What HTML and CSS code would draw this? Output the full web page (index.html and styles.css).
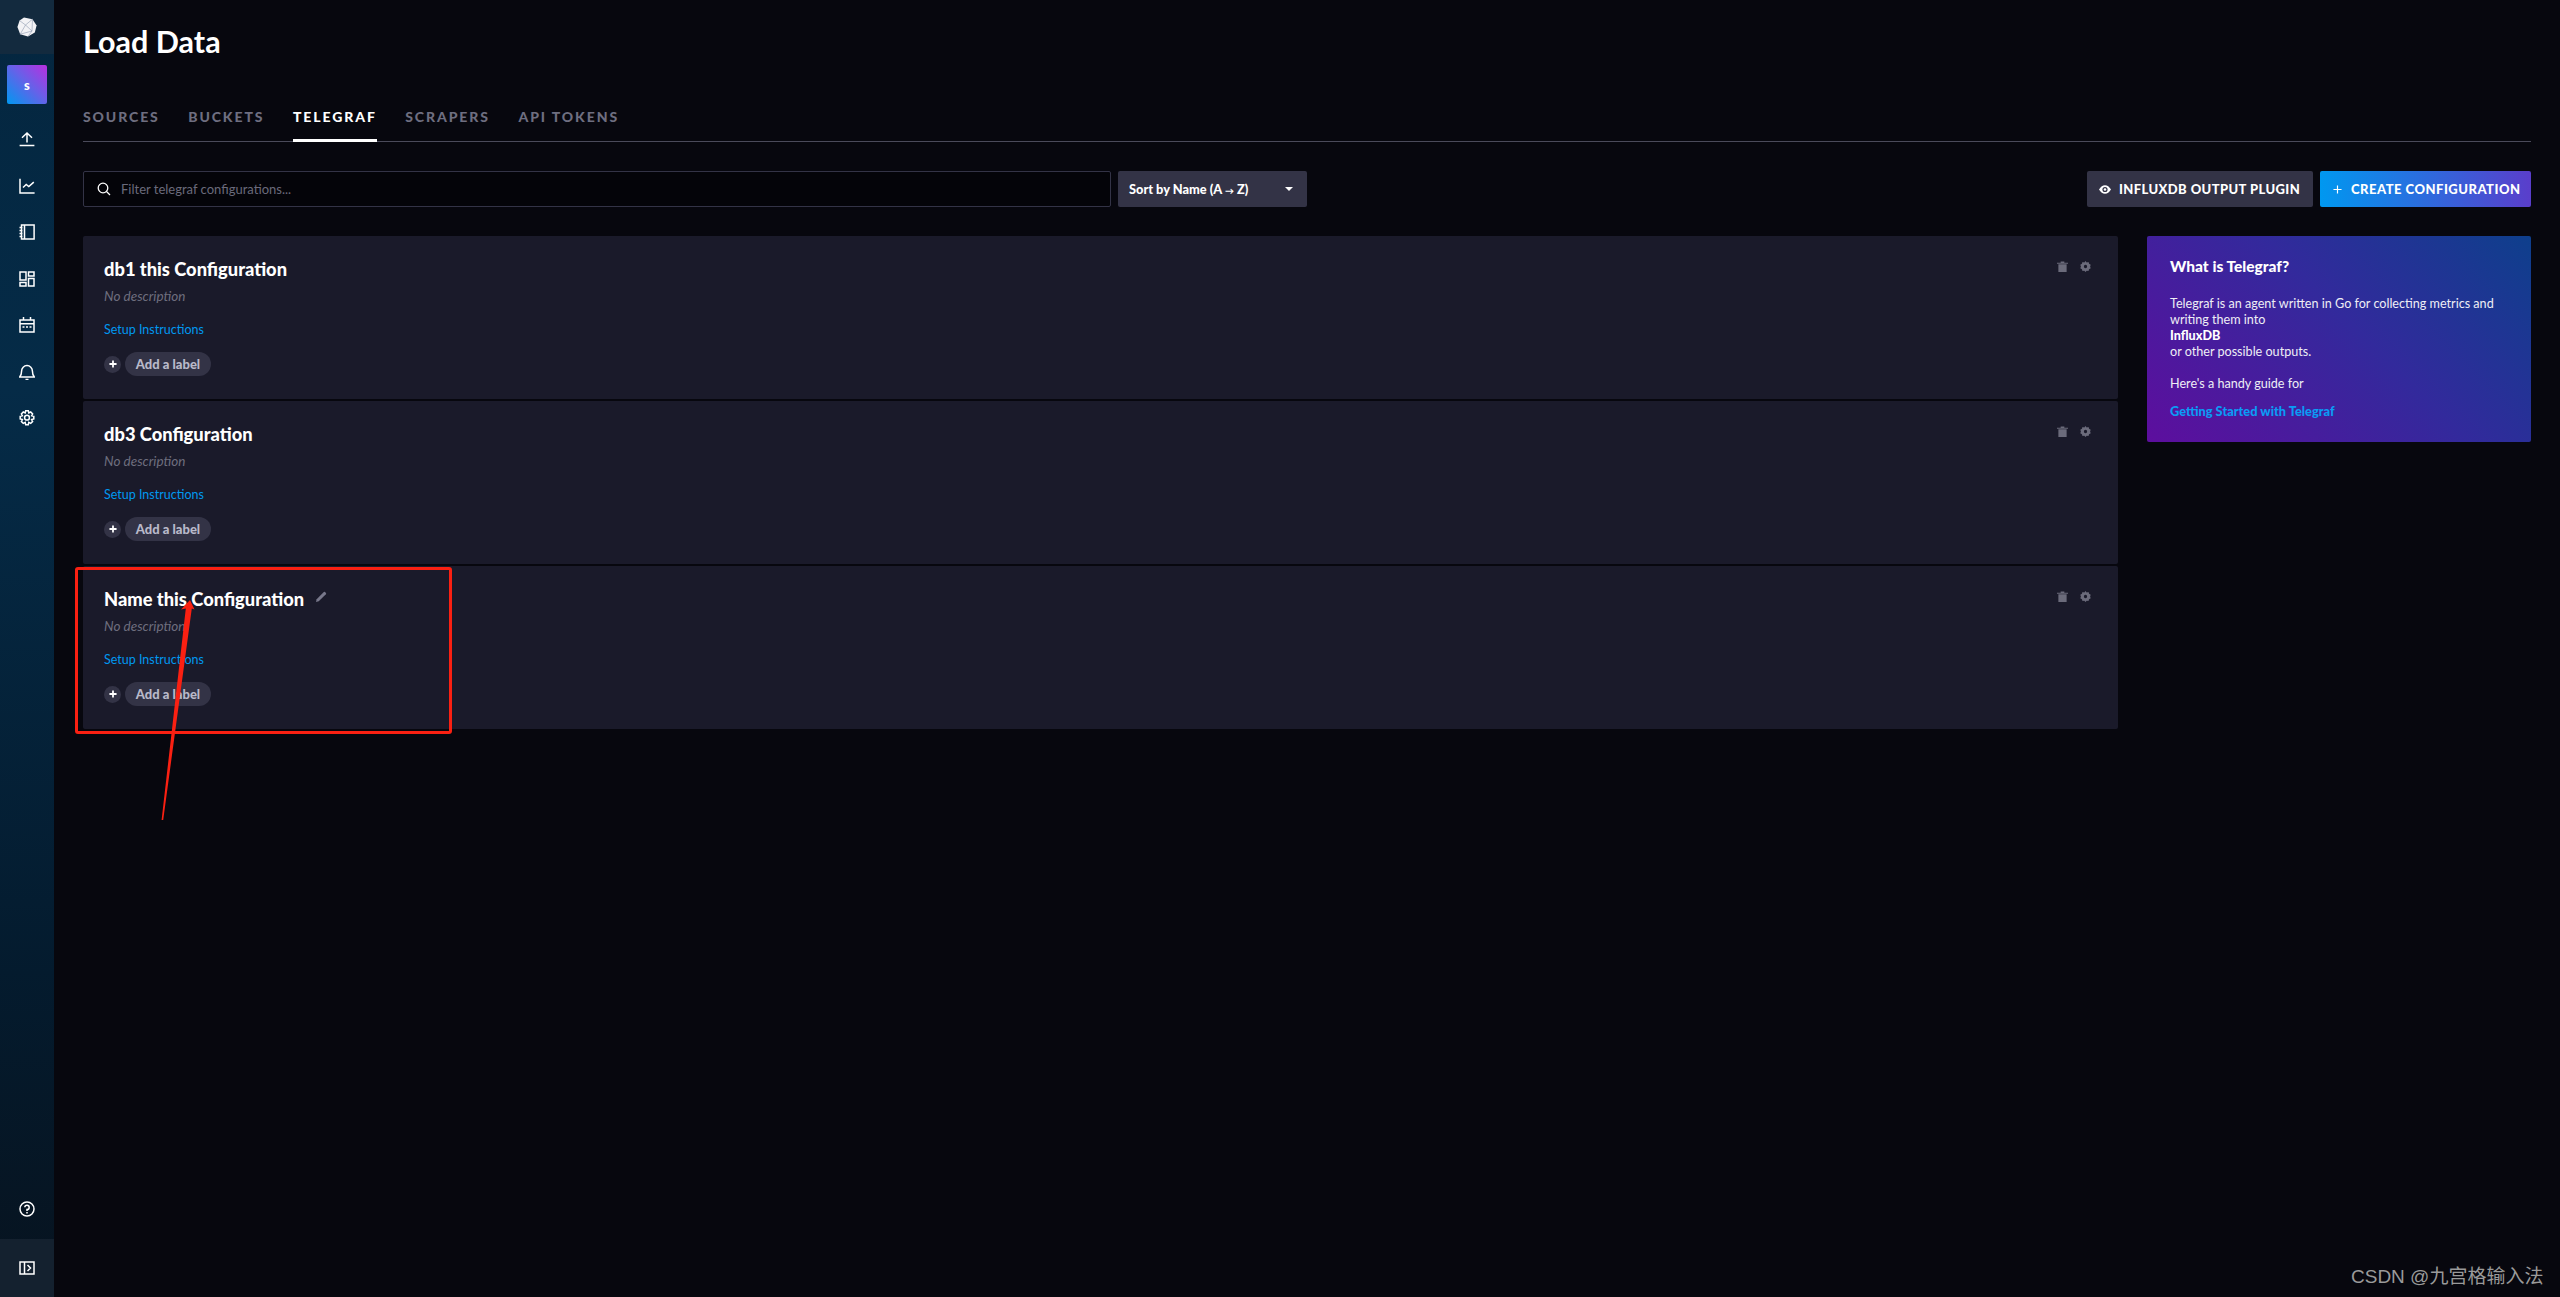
FILE: index.html
```html
<!DOCTYPE html>
<html lang="en">
<head>
<meta charset="utf-8">
<title>Load Data</title>
<link rel="stylesheet" href="styles.css">
</head>
<body>
<div class="app">
  <nav class="nav">
    <div class="nav-logo">
      <svg width="20" height="20" viewBox="0 0 20 20"><path d="M7 .6 15.500 2.200 19.600 8.400 17.800 15.600 11 19.400 3.200 17.200.4 10 2.600 3.600Z" fill="#f2f2f5"/><path d="M2.600 3.600 8.500 8 15.500 2.200M8.500 8 3.200 17.200M8.500 8 15 14 11 19.400M15 14 15.500 2.200M3.200 17.200 15 14" stroke="#8f9ab0" stroke-width=".6" fill="none"/></svg>
    </div>
    <div class="avatar">s</div>
    <div class="nav-items">
      <svg class="ico" viewBox="0 0 16 16"><path d="M8 11.500V2.200M3 6.800 8 2l5 4.800M.6 14.500h14.800"/></svg>
      <svg class="ico" viewBox="0 0 16 16"><path d="M1 .8V15h14.600M4 9.500l3.200-3 2.600 2 5-4.400"/></svg>
      <svg class="ico" viewBox="0 0 16 16"><path d="M2.500 1h12.600v14H2.500zM5.500 1v14M.5 3.500h3M.5 6.500h3M.5 9.500h3M.5 12.500h3"/></svg>
      <svg class="ico" viewBox="0 0 16 16"><path d="M1 1h6v8H1zM9.500 1H15v4H9.500zM9.500 7.500H15V15H9.500zM1 11.500h6V15H1z"/></svg>
      <svg class="ico" viewBox="0 0 16 16"><path d="M1 3h14v12H1zM1 6.800h14M4.500 0v3M11.500 0v3M3.500 10h2M7 10h2M10.500 10h2"/></svg>
      <svg class="ico" viewBox="0 0 16 16"><path d="M.6 13h14.800c-1.600-1.500-2-2.500-2-6A5.400 5.400 0 0 0 2.600 7c0 3.500-.4 4.500-2 6ZM6.500 15.400h3"/></svg>
      <svg class="ico" viewBox="0 0 16 16"><path d="M6.700.8h2.600l.5 2.100 1.900-.9 1.900 1.900-1 1.900 2.200.6v2.600l-2.200.6 1 1.900-1.900 1.900-1.900-1-.5 2.300H6.700l-.5-2.300-1.900 1-1.900-1.900 1-1.900-2.200-.6V6.400l2.200-.6-1-1.900L4.300 2l1.900.9Z"/><circle cx="8" cy="7.700" r="2.400"/></svg>
    </div>
    <div class="nav-help">
      <svg class="ico" viewBox="0 0 16 16"><circle cx="8" cy="8" r="7"/><path d="M5.800 6.200A2.200 2.200 0 1 1 8 8.600v1.300M8 11v1.500"/></svg>
    </div>
    <div class="nav-foot">
      <svg class="ico" viewBox="0 0 16 16"><path d="M1 2h14v12H1zM5.500 2v12M8.500 5l3 3-3 3"/></svg>
    </div>
  </nav>

  <main class="main">
    <h1 class="title">Load Data</h1>
    <div class="tabs">
      <a class="tab">Sources</a>
      <a class="tab">Buckets</a>
      <a class="tab tab-active">Telegraf</a>
      <a class="tab">Scrapers</a>
      <a class="tab">API Tokens</a>
    </div>

    <div class="toolbar">
      <div class="search">
        <svg class="search-ico" viewBox="0 0 14 14"><circle cx="6" cy="6" r="4.800"/><path d="m9.500 9.500 3.500 3.500"/></svg>
        <span>Filter telegraf configurations...</span>
      </div>
      <div class="sort">
        <span>Sort by Name (A <span class="arrow">→</span> Z)</span>
        <i class="caret"></i>
      </div>
      <div class="toolbar-right">
        <button class="btn btn-dark">
          <svg class="btn-ico" viewBox="0 0 14 10"><path d="M0 5c2-3.300 4.300-5 7-5s5 1.700 7 5c-2 3.300-4.300 5-7 5S2 8.300 0 5Z" fill="#fff"/><circle cx="7" cy="5" r="3" fill="#333346"/><circle cx="7" cy="5" r="1.500" fill="#fff"/></svg>
          Influxdb Output Plugin
        </button>
        <button class="btn btn-primary">
          <svg class="plus-ico" viewBox="0 0 10 10"><path d="M5 .5v9M.5 5h9" stroke="#fff" stroke-width="1.300"/></svg>
          Create Configuration
        </button>
      </div>
    </div>

    <div class="content">
      <div class="cards">
        <article class="card">
          <div class="card-head"><h2 class="card-title">db1 this Configuration</h2></div>
          <p class="card-desc">No description</p>
          <a class="card-link">Setup Instructions</a>
          <div class="labels"><span class="plus"><svg viewBox="0 0 9 9"><path d="M4.500.5v8M.5 4.500h8" stroke="#fff" stroke-width="2"/></svg></span><span class="pill">Add a label</span></div>
          <div class="actions">
            <svg class="act" viewBox="0 0 12 12"><path d="M0 2h12v1H0zM4 .5h4V2H4zM1.500 3.500h9V12h-9z" fill="#6b6b7b"/></svg>
            <svg class="act" viewBox="0 0 12 12"><path fill-rule="evenodd" d="M6 0l1.300 1.500 2-.3.6 1.900 1.800 1-.7 1.900.7 1.900-1.800 1-.6 1.900-2-.3L6 12l-1.300-1.500-2 .3-.6-1.900-1.800-1L1 6 .3 4.100l1.800-1 .6-1.900 2 .3ZM6 4.200a1.800 1.800 0 1 0 0 3.600 1.800 1.800 0 0 0 0-3.600Z" fill="#6b6b7b"/></svg>
          </div>
        </article>
        <article class="card">
          <div class="card-head"><h2 class="card-title">db3 Configuration</h2></div>
          <p class="card-desc">No description</p>
          <a class="card-link">Setup Instructions</a>
          <div class="labels"><span class="plus"><svg viewBox="0 0 9 9"><path d="M4.500.5v8M.5 4.500h8" stroke="#fff" stroke-width="2"/></svg></span><span class="pill">Add a label</span></div>
          <div class="actions">
            <svg class="act" viewBox="0 0 12 12"><path d="M0 2h12v1H0zM4 .5h4V2H4zM1.500 3.500h9V12h-9z" fill="#6b6b7b"/></svg>
            <svg class="act" viewBox="0 0 12 12"><path fill-rule="evenodd" d="M6 0l1.300 1.500 2-.3.6 1.900 1.800 1-.7 1.900.7 1.900-1.800 1-.6 1.900-2-.3L6 12l-1.300-1.500-2 .3-.6-1.900-1.800-1L1 6 .3 4.100l1.800-1 .6-1.900 2 .3ZM6 4.200a1.800 1.800 0 1 0 0 3.600 1.800 1.800 0 0 0 0-3.600Z" fill="#6b6b7b"/></svg>
          </div>
        </article>
        <article class="card">
          <div class="card-head">
            <h2 class="card-title">Name this Configuration</h2>
            <svg class="pencil" viewBox="0 0 12 12"><path d="M0 12l.7-3L8.500 1.200a1 1 0 0 1 1.400 0l.9.900a1 1 0 0 1 0 1.400L3 11.300Z" fill="#77778a"/></svg>
          </div>
          <p class="card-desc">No description</p>
          <a class="card-link">Setup Instructions</a>
          <div class="labels"><span class="plus"><svg viewBox="0 0 9 9"><path d="M4.500.5v8M.5 4.500h8" stroke="#fff" stroke-width="2"/></svg></span><span class="pill">Add a label</span></div>
          <div class="actions">
            <svg class="act" viewBox="0 0 12 12"><path d="M0 2h12v1H0zM4 .5h4V2H4zM1.500 3.500h9V12h-9z" fill="#6b6b7b"/></svg>
            <svg class="act" viewBox="0 0 12 12"><path fill-rule="evenodd" d="M6 0l1.300 1.500 2-.3.6 1.900 1.800 1-.7 1.900.7 1.900-1.800 1-.6 1.900-2-.3L6 12l-1.300-1.500-2 .3-.6-1.900-1.800-1L1 6 .3 4.100l1.800-1 .6-1.900 2 .3ZM6 4.200a1.800 1.800 0 1 0 0 3.600 1.800 1.800 0 0 0 0-3.600Z" fill="#6b6b7b"/></svg>
          </div>
        </article>
      </div>

      <aside class="panel">
        <h3 class="panel-title">What is Telegraf?</h3>
        <p class="panel-text">Telegraf is an agent written in Go for collecting metrics and writing them into<br><b>InfluxDB</b><br>or other possible outputs.</p>
        <p class="panel-text">Here's a handy guide for</p>
        <a class="panel-link">Getting Started with Telegraf</a>
      </aside>
    </div>
  </main>
</div>

<div class="mark-box"></div>
<svg class="mark-arrow" width="40" height="230" viewBox="0 0 40 230"><path d="M30 1 34.500 10.500 31.800 9.500 3.200 221H1.600L25.800 9.500 21 10.500Z" fill="#fa2012"/></svg>
<div class="watermark">CSDN @九宫格输入法</div>
</body>
</html>
```
FILE: styles.css
```css
* { box-sizing: border-box; }
html, body { margin: 0; height: 100%; }
body {
  background: #07070e;
  color: #fff;
  font-family: Lato, "Open Sans", "Liberation Sans", sans-serif;
  overflow: hidden;
  position: relative;
}
.app { display: flex; height: 1297px; }

.nav {
  width: 54px;
  flex: none;
  display: flex;
  flex-direction: column;
  background: linear-gradient(180deg, #04263f 0%, #052b47 30%, #041b2e 75%, #07131f 100%);
}
.nav-logo {
  height: 54px;
  display: flex;
  align-items: center;
  justify-content: center;
  background: #132a3e;
}
.avatar {
  width: 40px;
  height: 39px;
  margin: 11px 7px 0;
  border-radius: 2px;
  background: linear-gradient(45deg, #0098f0 0%, #6a5fe8 55%, #b82fe0 100%);
  display: flex;
  align-items: center;
  justify-content: center;
  font-size: 13px;
  font-weight: 900;
}
.nav-items {
  margin-top: 27px;
  display: flex;
  flex-direction: column;
  align-items: center;
  gap: 30.500px;
}
.ico {
  width: 16px;
  height: 16px;
  display: block;
  fill: none;
  stroke: #fff;
  stroke-width: 1.500;
}
.nav-help {
  margin-top: auto;
  height: 60px;
  display: flex;
  align-items: center;
  justify-content: center;
}
.nav-foot {
  height: 58px;
  background: #14212f;
  display: flex;
  align-items: center;
  justify-content: center;
}

.main {
  flex: 1;
  min-width: 0;
  padding: 0 29px;
}
.title {
  margin: 0;
  height: 83px;
  padding-top: 21px;
  font-size: 30.500px;
  line-height: 40px;
  font-weight: 700;
}
.tabs {
  display: flex;
  height: 59px;
  gap: 28.500px;
  border-bottom: 1px solid #4a4a5a;
}
.tab {
  height: 59px;
  padding-top: 25px;
  font-size: 14px;
  line-height: 18px;
  font-weight: 900;
  letter-spacing: 1.900px;
  text-transform: uppercase;
  color: #6e6e80;
}
.tab-active {
  color: #fff;
  border-bottom: 3px solid #fff;
}

.toolbar {
  display: flex;
  align-items: stretch;
  gap: 7px;
  height: 36px;
  margin-top: 29px;
}
.search {
  width: 1028px;
  border: 1px solid #333346;
  border-radius: 2px;
  background: #040409;
  display: flex;
  align-items: center;
  padding-left: 13px;
  gap: 10px;
  font-size: 13px;
  color: #6a6a7b;
}
.search-ico {
  width: 14px;
  height: 14px;
  fill: none;
  stroke: #fff;
  stroke-width: 1.300;
}
.sort {
  width: 189px;
  background: #333346;
  border-radius: 2px;
  display: flex;
  align-items: center;
  justify-content: space-between;
  padding: 0 14px 0 11px;
  font-size: 12.800px;
  font-weight: 900;
}
.arrow { font-size: 9px; }
.caret {
  width: 0;
  height: 0;
  border-left: 4px solid transparent;
  border-right: 4px solid transparent;
  border-top: 4px solid #fff;
}
.toolbar-right {
  margin-left: auto;
  display: flex;
  gap: 7px;
}
.btn {
  border: 0;
  border-radius: 2px;
  color: #fff;
  font-family: inherit;
  font-size: 13px;
  font-weight: 900;
  text-transform: uppercase;
  display: flex;
  align-items: center;
  height: 36px;
  white-space: nowrap;
}
.btn-dark {
  width: 226px;
  gap: 8px;
  padding: 0 12px;
  letter-spacing: .4px;
  background: #333346;
}
.btn-primary {
  width: 211px;
  gap: 9px;
  padding: 0 13px;
  letter-spacing: .5px;
  background: linear-gradient(90deg, #0098f0 0%, #5a3ecb 100%);
}
.btn-ico { width: 12px; height: 9px; flex: none; }
.plus-ico { width: 9px; height: 9px; flex: none; }

.content {
  display: flex;
  align-items: flex-start;
  gap: 29px;
  margin-top: 29px;
}
.cards {
  width: 2035px;
  flex: none;
  display: flex;
  flex-direction: column;
  gap: 2px;
}
.card {
  position: relative;
  height: 163px;
  background: #1a1a2a;
  border-radius: 2px;
  padding: 21px 21px 0;
}
.card-head { display: flex; align-items: center; gap: 12px; height: 24px; }
.card-title {
  margin: 0;
  font-size: 18.300px;
  line-height: 24px;
  font-weight: 900;
}
.pencil { width: 11px; height: 11px; margin-top: -6px; }
.card-desc {
  margin: 6px 0 0;
  height: 18px;
  font-size: 13.500px;
  line-height: 18px;
  font-style: italic;
  color: #6e6e7e;
}
.card-link {
  display: block;
  margin-top: 16px;
  font-size: 12.500px;
  line-height: 18px;
  color: #0098f0;
}
.labels {
  display: flex;
  align-items: center;
  gap: 4px;
  margin-top: 13px;
}
.plus {
  width: 17px;
  height: 17px;
  border-radius: 50%;
  background: #333346;
  display: flex;
  align-items: center;
  justify-content: center;
}
.plus svg { width: 8px; height: 8px; }
.pill {
  height: 24px;
  width: 86px;
  border-radius: 12px;
  background: #333346;
  color: #b9b9c9;
  font-size: 13px;
  font-weight: 900;
  line-height: 24px;
  text-align: center;
}
.actions {
  position: absolute;
  top: 25px;
  right: 27px;
  display: flex;
  gap: 12px;
}
.act { width: 11px; height: 11px; display: block; }

.panel {
  width: 384px;
  height: 206px;
  flex: none;
  border-radius: 2px;
  padding: 20px 23px 0;
  background: linear-gradient(45deg, #5d0e9e 0%, #322a9c 55%, #0e3f8c 100%);
  font-size: 12.600px;
  line-height: 16px;
}
.panel-title {
  margin: 0 0 20px;
  font-size: 15.500px;
  line-height: 20px;
  font-weight: 900;
}
.panel-text { margin: 0 0 16px; color: #eeeef5; }
.panel-text b { font-weight: 900; color: #fff; }
.panel-link { display: block; margin-top: -5px; color: #0a9cf5; font-weight: 900; font-size: 12.800px; }

.mark-box {
  position: absolute;
  left: 75px;
  top: 567px;
  width: 377px;
  height: 167px;
  border: 3px solid #fa2012;
  border-radius: 3px;
}
.mark-arrow { position: absolute; left: 160px; top: 599px; }
.watermark {
  position: absolute;
  left: 2351px;
  top: 1265px;
  font-family: "Liberation Sans", "Noto Sans CJK SC", sans-serif;
  font-size: 19px;
  line-height: 24px;
  color: #9a9a9a;
  white-space: nowrap;
}
```
